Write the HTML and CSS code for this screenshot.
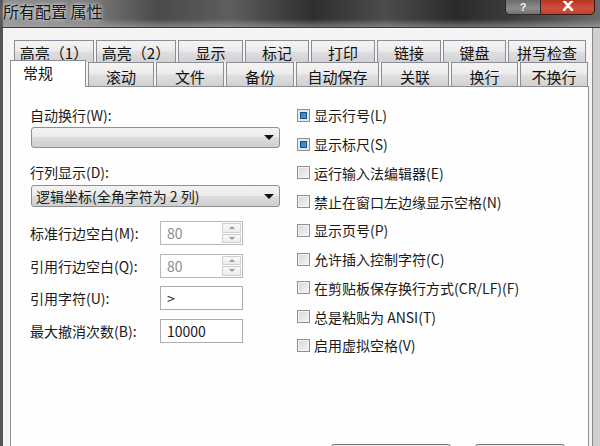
FILE: index.html
```html
<!DOCTYPE html>
<html lang="zh-CN">
<head>
<meta charset="utf-8">
<title>所有配置 属性</title>
<link rel="stylesheet" href="styles.css">
</head>
<body>
<div class="window">
  <div class="titlebar">
    <span class="title">所有配置 属性</span>
    <div class="caption-btns">
      <div class="cap-help">?</div>
      <div class="cap-close">
        <svg width="14" height="10" viewBox="0 0 14 10"><path d="M3 0 L11 9 M11 0 L3 9" stroke="#fff" stroke-width="2.6" stroke-linecap="round"/></svg>
      </div>
    </div>
  </div>
  <div class="client">
    <div class="tabrow row1">
      <div class="tab w80">高亮（1）</div>
      <div class="tab w80">高亮（2）</div>
      <div class="tab w65">显示</div>
      <div class="tab w64">标记</div>
      <div class="tab w64">打印</div>
      <div class="tab w64">链接</div>
      <div class="tab w63">键盘</div>
      <div class="tab w78">拼写检查</div>
    </div>
    <div class="tabrow row2">
      <div class="tab selected w76">常规</div>
      <div class="tab w66">滚动</div>
      <div class="tab w68">文件</div>
      <div class="tab w68">备份</div>
      <div class="tab w83">自动保存</div>
      <div class="tab w68">关联</div>
      <div class="tab w67">换行</div>
      <div class="tab w68">不换行</div>
    </div>
    <div class="panel">
      <div class="cols">
        <div class="leftcol">
          <div class="label">自动换行(W):</div>
          <div class="combo combo1"><span class="combo-text"></span><span class="arrow"></span></div>
          <div class="label label2">行列显示(D):</div>
          <div class="combo combo2"><span class="combo-text">逻辑坐标(全角字符为 2 列)</span><span class="arrow"></span></div>
          <div class="fields">
            <div class="field">
              <span class="flabel">标准行边空白(M):</span>
              <div class="input disabled"><span class="itext">80</span><div class="spin"><span class="spin-up"></span><span class="spin-down"></span></div></div>
            </div>
            <div class="field">
              <span class="flabel">引用行边空白(Q):</span>
              <div class="input disabled"><span class="itext">80</span><div class="spin"><span class="spin-up"></span><span class="spin-down"></span></div></div>
            </div>
            <div class="field">
              <span class="flabel">引用字符(U):</span>
              <div class="input"><span class="itext">&gt;</span></div>
            </div>
            <div class="field">
              <span class="flabel">最大撤消次数(B):</span>
              <div class="input"><span class="itext">10000</span></div>
            </div>
          </div>
        </div>
        <div class="rightcol">
          <div class="check"><span class="box checked"></span><span>显示行号(L)</span></div>
          <div class="check"><span class="box checked"></span><span>显示标尺(S)</span></div>
          <div class="check"><span class="box"></span><span>运行输入法编辑器(E)</span></div>
          <div class="check"><span class="box"></span><span>禁止在窗口左边缘显示空格(N)</span></div>
          <div class="check"><span class="box"></span><span>显示页号(P)</span></div>
          <div class="check"><span class="box"></span><span>允许插入控制字符(C)</span></div>
          <div class="check"><span class="box"></span><span>在剪贴板保存换行方式(CR/LF)(F)</span></div>
          <div class="check"><span class="box"></span><span>总是粘贴为 ANSI(T)</span></div>
          <div class="check"><span class="box"></span><span>启用虚拟空格(V)</span></div>
        </div>
      </div>
      <div class="btnrow">
        <div class="btn btn-wide"></div>
        <div class="btn btn-narrow"></div>
      </div>
    </div>
  </div>
</div>
</body>
</html>
```

FILE: styles.css
```css
html, body {
  margin: 0;
  padding: 0;
}
body {
  width: 600px;
  height: 446px;
  overflow: hidden;
  font-family: "Noto Sans CJK SC", "Noto Sans", sans-serif;
  font-size: 14px;
  color: #1a1a1a;
  background: #cfcfcf;
}
.window {
  width: 600px;
  height: 446px;
  display: flex;
  flex-direction: column;
  border-left: 3px solid #555;
  box-sizing: border-box;
}
.titlebar {
  height: 27px;
  flex: none;
  display: flex;
  align-items: flex-start;
  border-bottom: 1px solid #3a3a3a;
  background:
    linear-gradient(to bottom, rgba(255,255,255,0) 70%, rgba(190,190,190,0.45) 100%),
    linear-gradient(to right, #8e8e8e 0%, #7c7c7c 14%, #4a4a4a 26%, #5e5e5e 38%, #2e2e2e 52%, #4c4c4c 64%, #2a2a2a 76%, #3e3e3e 86%, #6a6a6a 100%);
}
.title {
  font-size: 16px;
  line-height: 22px;
  color: #151515;
  text-shadow: 0 0 6px rgba(255,255,255,0.8), 0 0 3px rgba(255,255,255,0.7);
}
.caption-btns {
  margin-left: auto;
  margin-right: 5px;
  display: flex;
}
.cap-help {
  width: 36px;
  height: 15px;
  box-sizing: border-box;
  border: 1px solid #2a2a2a;
  border-top: none;
  border-radius: 0 0 0 5px;
  background: linear-gradient(#6c6c6c, #8c8c8c 60%, #727272);
  color: #f0f0f0;
  font-size: 11px;
  font-weight: bold;
  line-height: 14px;
  text-align: center;
  font-family: "Liberation Sans", sans-serif;
}
.cap-close {
  width: 54px;
  height: 15px;
  box-sizing: border-box;
  border: 1px solid #3a1a14;
  border-left: none;
  border-top: none;
  border-radius: 0 0 5px 0;
  background: linear-gradient(#b83424, #d0503c 60%, #c44030);
  display: flex;
  justify-content: center;
  align-items: flex-start;
  padding-top: 1px;
}
.client {
  flex: 1;
  display: flex;
  flex-direction: column;
  padding: 12px 3px 0 7px;
  background: #f4f4f4;
  border-right: 1px solid #8a8a8a;
  margin-right: 7px;
  min-height: 0;
}
.tabrow {
  display: flex;
  gap: 2px;
}
.row1 {
  height: 22px;
  margin-left: 4px;
}
.row2 {
  height: 24px;
  align-items: flex-end;
}
.tab {
  box-sizing: border-box;
  height: 100%;
  border: 1px solid #8b8e96;
  border-bottom: none;
  background: linear-gradient(#f4f4f4, #ececec 45%, #dedede 55%, #d2d2d2);
  font-size: 15px;
  color: #111;
  text-align: center;
  line-height: 24px;
  white-space: nowrap;
}
.row1 .tab { line-height: 24px; }
.row2 .tab { line-height: 28px; }
.tab.selected {
  height: 27px;
  margin-bottom: -1px;
  background: #ffffff;
  position: relative;
  z-index: 2;
  text-align: left;
  padding-left: 12px;
  line-height: 24px;
}
.w63 { width: 63px; }
.w64 { width: 64px; }
.w65 { width: 65px; }
.w66 { width: 66px; }
.w67 { width: 67px; }
.w68 { width: 68px; }
.w76 { width: 76px; }
.w78 { width: 78px; }
.w80 { width: 80px; }
.w83 { width: 83px; }
.panel {
  width: 579px;
  box-sizing: border-box;
  flex: 1;
  border: 1px solid #8b8e96;
  border-bottom: none;
  background: #fefefe;
  padding: 14px 0 0 19px;
  display: flex;
  flex-direction: column;
}
.cols {
  display: flex;
}
.leftcol {
  width: 267px;
  padding-top: 4px;
  display: flex;
  flex-direction: column;
}
.label {
  line-height: 20px;
  height: 20px;
}
.label2 {
  margin-top: 14px;
}
.combo {
  width: 249px;
  margin-left: 1px;
  box-sizing: border-box;
  border: 1px solid #8e8f8f;
  border-radius: 3px;
  background: linear-gradient(#f3f3f3, #ebebeb 50%, #dddddd 50%, #cfcfcf);
  display: flex;
  align-items: center;
  padding-left: 4px;
}
.combo1 {
  height: 21px;
  margin-top: 2px;
}
.combo2 {
  height: 22px;
  margin-top: 3px;
}
.combo-text {
  flex: 1;
  line-height: 18px;
  white-space: nowrap;
}
.arrow {
  width: 0;
  height: 0;
  border-left: 5px solid transparent;
  border-right: 5px solid transparent;
  border-top: 5px solid #111;
  margin-right: 5px;
}
.fields {
  margin-top: 14px;
  display: flex;
  flex-direction: column;
  gap: 8.5px;
}
.field {
  display: flex;
  align-items: center;
  height: 24px;
}
.flabel {
  width: 130px;
  white-space: nowrap;
}
.input {
  width: 83px;
  height: 24px;
  box-sizing: border-box;
  border: 1px solid #abadb3;
  background: #fff;
  display: flex;
  align-items: center;
  padding-left: 6px;
}
.input.disabled {
  border-color: #b8b8b8;
  color: #8c8c8c;
  padding-right: 1px;
}
.itext {
  flex: 1;
  line-height: 18px;
}
.spin {
  width: 19px;
  height: 20px;
  display: flex;
  flex-direction: column;
  gap: 1px;
}
.spin-up, .spin-down {
  flex: 1;
  box-sizing: border-box;
  border: 1px solid #d0d0d0;
  background: linear-gradient(#f8f8f8, #ececec);
  display: flex;
  justify-content: center;
  align-items: center;
}
.spin-up::after {
  content: "";
  border-left: 3px solid transparent;
  border-right: 3px solid transparent;
  border-bottom: 3px solid #9a9a9a;
}
.spin-down::after {
  content: "";
  border-left: 3px solid transparent;
  border-right: 3px solid transparent;
  border-top: 3px solid #9a9a9a;
}
.rightcol {
  display: flex;
  flex-direction: column;
}
.check {
  height: 28.75px;
  display: flex;
  align-items: center;
  gap: 4px;
  white-space: nowrap;
}
.box {
  width: 13px;
  height: 13px;
  box-sizing: border-box;
  border: 1px solid #8f8f8f;
  background: linear-gradient(135deg, #d6d6d6, #f6f6f6);
  box-shadow: inset 0 0 0 1px #f4f4f4;
  flex: none;
}
.box.checked {
  background: linear-gradient(135deg, #2a6fb4, #2f9ad8 60%, #5cc0ec);
  box-shadow: inset 0 0 0 2px #e8e8e8, inset 0 0 0 3px #1e4f86;
}
.btnrow {
  margin-top: 84px;
  display: flex;
  justify-content: flex-end;
  gap: 24px;
  padding-right: 23px;
}
.btn {
  height: 23px;
  box-sizing: border-box;
  border: 1px solid #707070;
  border-radius: 3px;
  background: linear-gradient(#f2f2f2, #dddddd);
}
.btn-wide { width: 120px; }
.btn-narrow { width: 90px; }
```
